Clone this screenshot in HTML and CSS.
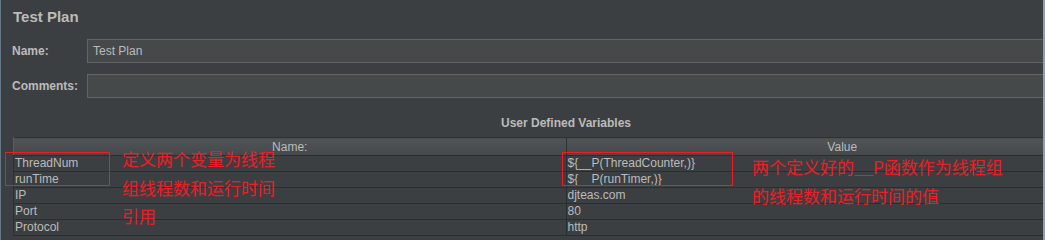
FILE: index.html
```html
<!DOCTYPE html>
<html lang="en">
<head>
  <meta charset="UTF-8" />
  <title>Test Plan</title>
  <link rel="stylesheet" href="styles.css">
</head>
<body>
  <div class="panel">
    <h1 class="title">Test Plan</h1>

    <div class="field">
      <label class="field-label">Name:</label>
      <div class="field-input">Test Plan</div>
    </div>
    <div class="field">
      <label class="field-label">Comments:</label>
      <div class="field-input"></div>
    </div>

    <div class="section-title">User Defined Variables</div>

    <table class="vars">
      <colgroup>
        <col class="col-name">
        <col class="col-value">
      </colgroup>
      <thead>
        <tr>
          <th>Name:</th>
          <th>Value</th>
        </tr>
      </thead>
      <tbody>
        <tr><td>ThreadNum</td><td>${__P(ThreadCounter,)}</td></tr>
        <tr><td>runTime</td><td>${__P(runTimer,)}</td></tr>
        <tr><td>IP</td><td>djteas.com</td></tr>
        <tr><td>Port</td><td>80</td></tr>
        <tr><td>Protocol</td><td>http</td></tr>
      </tbody>
    </table>

    <!-- annotations drawn over the screenshot -->
    <div class="mark mark-names"></div>
    <div class="mark mark-values"></div>
    <p class="note note-names">定义两个变量为线程<br>组线程数和运行时间<br>引用</p>
    <p class="note note-values">两个定义好的__P函数作为线程组<br>的线程数和运行时间的值</p>
  </div>
</body>
</html>
```

FILE: styles.css
```css
* {
  box-sizing: border-box;
  margin: 0;
  padding: 0;
}

body {
  font-family: 'Liberation Sans', Arial, sans-serif;
  background-color: #3c3f41;
  color: #bbbbbb;
  overflow: hidden;
}

.panel {
  position: relative;
  width: 1045px;
  height: 240px;
  overflow: hidden;
  border-left: 1px solid #687888;
  border-right: 2px solid #8e9fb3;
}

.title {
  font-size: 15px;
  line-height: 18px;
  font-weight: bold;
  margin: 8px 0 13px 12px;
}

.field {
  display: flex;
  align-items: center;
  height: 24px;
  margin-bottom: 11px;
}

.field-label {
  width: 86px;
  padding-left: 11px;
  font-size: 12px;
  font-weight: bold;
}

.field-input {
  flex: 1;
  height: 24px;
  background-color: #45494a;
  border: 1px solid #646464;
  border-right: none;
  font-size: 12px;
  line-height: 22px;
  padding-left: 5px;
}

.section-title {
  margin-top: 17px;
  width: 1130px;
  text-align: center;
  font-size: 12px;
  font-weight: bold;
  line-height: 16px;
}

.vars {
  margin: 6px 0 0 12px;
  width: 1106px;
  table-layout: fixed;
  border-collapse: collapse;
  font-size: 12px;
  border-top: 1px solid #2e3032;
  border-left: 1px solid #2e3032;
}

.vars th {
  height: 18px;
  font-weight: normal;
  background: linear-gradient(#505456, #45494b);
  border-bottom: 1px solid #2b2d2f;
  border-right: 1px solid #2f3133;
  border-left: 1px solid #5a5e60;
  line-height: 16px;
  padding-top: 1px;
}

.vars td {
  height: 16px;
  line-height: 15px;
  padding-left: 1px;
  border-bottom: 1px solid #2b2d2f;
  border-right: 1px solid #2b2d2f;
  white-space: nowrap;
  overflow: hidden;
}

.mark {
  position: absolute;
  border: 1px solid #ee1c25;
}

.mark-names {
  left: 4px;
  top: 152px;
  width: 105px;
  height: 34px;
}

.mark-values {
  left: 561px;
  top: 152px;
  width: 171px;
  height: 34px;
}

.note {
  position: absolute;
  font-family: 'Noto Sans CJK SC', sans-serif;
  font-size: 17px;
  color: #ee1c25;
  white-space: nowrap;
}

.note-names {
  left: 121px;
  top: 145px;
  line-height: 28.5px;
}

.note-values {
  left: 751px;
  top: 152px;
  line-height: 29px;
}
```
